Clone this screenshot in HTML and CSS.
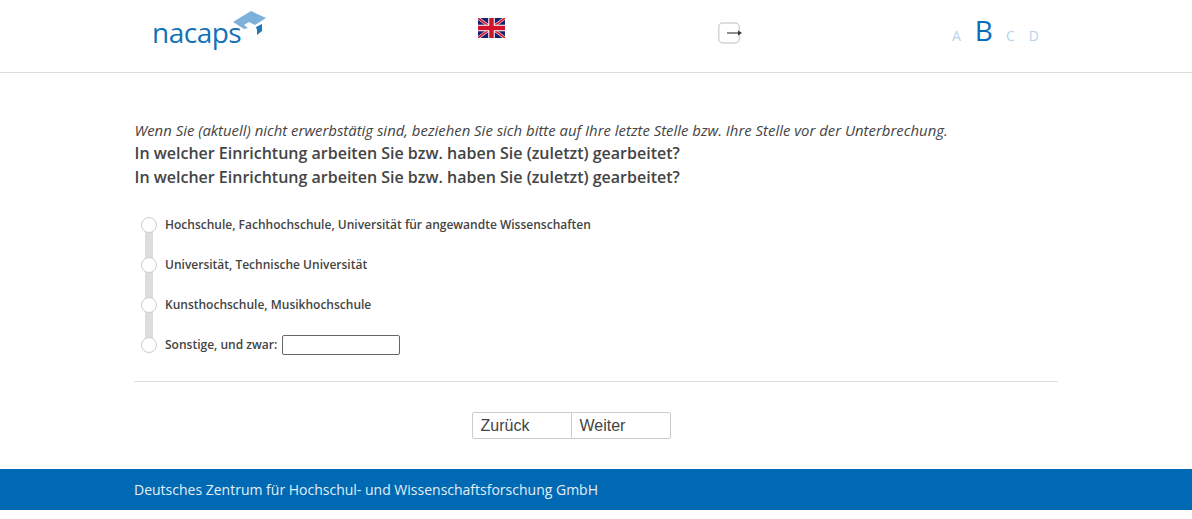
FILE: index.html
```html
<!DOCTYPE html>
<html lang="de">
<head>
<meta charset="utf-8">
<title>nacaps</title>
<link rel="stylesheet" href="styles.css">
</head>
<body>
<header class="topbar">
  <div class="logo">
    <span class="logo-text">nacaps</span>
    <svg class="logo-cap" width="34" height="28" viewBox="0 0 34 28">
      <path d="M0 11 L18 0 L33 7 L22 14 L16 11 L11 14 L15 17 L11 18 Z" fill="#7db0da"/>
      <path d="M23 16 L29 13 L29 20 L24 24 L24 19 Z" fill="#1f78b8"/>
    </svg>
  </div>
  <div class="flag-cell">
    <svg width="27" height="20" viewBox="0 0 27 20">
      <rect width="27" height="20" fill="#1a1f6b"/>
      <path d="M0 0 L27 20 M27 0 L0 20" stroke="#f3d6da" stroke-width="3"/>
      <path d="M0 0 L27 20 M27 0 L0 20" stroke="#cf142b" stroke-width="1.5"/>
      <path d="M13.5 0 V20 M0 10 H27" stroke="#fff" stroke-width="6.5"/>
      <path d="M13.5 0 V20 M0 10 H27" stroke="#cf142b" stroke-width="4.5"/>
    </svg>
  </div>
  <div class="exit-cell">
    <svg width="24" height="22" viewBox="0 0 24 22">
      <rect x="0.75" y="1" width="20.5" height="20" rx="4" fill="none" stroke="#d4d4d4" stroke-width="1.5"/>
      <path d="M9 11 H20" stroke="#444" stroke-width="1.2"/>
      <path d="M20 8.5 L24 11 L20 13.5 Z" fill="#333"/>
    </svg>
  </div>
  <div class="letters">
    <span class="letter">A</span>
    <span class="letter current">B</span>
    <span class="letter">C</span>
    <span class="letter">D</span>
  </div>
</header>
<main class="content">
  <p class="note">Wenn Sie (aktuell) nicht erwerbstätig sind, beziehen Sie sich bitte auf Ihre letzte Stelle bzw. Ihre Stelle vor der Unterbrechung.</p>
  <h1 class="question">In welcher Einrichtung arbeiten Sie bzw. haben Sie (zuletzt) gearbeitet?</h1>
  <h1 class="question">In welcher Einrichtung arbeiten Sie bzw. haben Sie (zuletzt) gearbeitet?</h1>
  <div class="options">
    <label class="option"><span class="radio"></span>Hochschule, Fachhochschule, Universität für angewandte Wissenschaften</label>
    <label class="option"><span class="radio"></span>Universität, Technische Universität</label>
    <label class="option"><span class="radio"></span>Kunsthochschule, Musikhochschule</label>
    <label class="option"><span class="radio"></span>Sonstige, und zwar:<input class="other" type="text"></label>
  </div>
  <hr class="rule">
  <div class="nav-buttons">
    <button class="btn" type="button">Zurück</button>
    <button class="btn" type="button">Weiter</button>
  </div>
</main>
<footer class="footer">Deutsches Zentrum für Hochschul- und Wissenschaftsforschung GmbH</footer>
</body>
</html>
```
FILE: styles.css
```css
* { box-sizing: border-box; }
html, body { margin: 0; padding: 0; background: #fff; }
body { font-family: "Open Sans", sans-serif; color: #444; height: 519px; overflow: hidden; }

.topbar {
  height: 73px;
  border-bottom: 1px solid #ddd;
  display: grid;
  grid-template-columns: 325px 240px 234px 1fr;
  padding-left: 153px;
}
.logo { display: flex; align-items: flex-start; }
.logo-text {
  font-size: 28px;
  font-weight: 500;
  line-height: 38px;
  margin-top: 13px;
  margin-left: -1px;
  color: #1272b5;
  letter-spacing: -0.5px;
}
.logo-cap { margin: 11px 0 0 -8px; }
.flag-cell { padding-top: 18px; }
.flag-cell svg, .exit-cell svg { display: block; }
.exit-cell { padding-top: 22px; }
.letters { display: flex; align-items: baseline; gap: 14px; padding-top: 11px; }
.letter { font-size: 14px; color: #b5d3ec; }
.letter.current { font-size: 28px; font-weight: 500; line-height: 38px; color: #0a6cb8; margin-right: -1px; }

.content { width: 924px; margin-left: 134px; padding-top: 47px; }
.note { margin: 0; padding-left: 0.5px; font-size: 14.9px; line-height: 21px; font-style: italic; color: #444; }
.question { margin: 0; padding-left: 0.5px; font-size: 16px; line-height: 24px; font-weight: 600; color: #444; }

.options {
  margin-top: 15px;
  padding-left: 7px;
  display: flex;
  flex-direction: column;
  background: linear-gradient(#ddd, #ddd) 11px 21px / 8px 120px no-repeat;
}
.option {
  height: 40px;
  display: flex;
  align-items: center;
  font-size: 12px;
  font-weight: 600;
  color: #444;
}
.radio {
  width: 16px;
  height: 16px;
  margin-top: 2px;
  margin-right: 8px;
  border: 1px solid #ccc;
  border-radius: 50%;
  background: #fff;
  flex: none;
}
.other {
  width: 118px;
  height: 20px;
  margin-top: 2px;
  margin-left: 5px;
  border: 1px solid #666;
  border-radius: 2px;
  background: #fff;
  padding: 0;
}

.rule { margin: 17px 0 0; border: 0; border-top: 1px solid #ddd; }
.nav-buttons { display: flex; justify-content: center; margin-top: 30px; padding-right: 49px; }
.btn {
  width: 100px;
  height: 27px;
  padding: 0 0 0 7.5px;
  text-align: left;
  font-family: "Liberation Sans", sans-serif;
  font-size: 16px;
  color: #444;
  background: #fff;
  border: 1px solid #ccc;
  border-radius: 2px 0 0 2px;
}
.btn + .btn { margin-left: -1px; border-radius: 0 2px 2px 0; }

.footer {
  margin-top: 30px;
  height: 41px;
  background: #0069b3;
  color: #e3eef7;
  font-size: 14px;
  line-height: 41px;
  padding-left: 134px;
}
```
